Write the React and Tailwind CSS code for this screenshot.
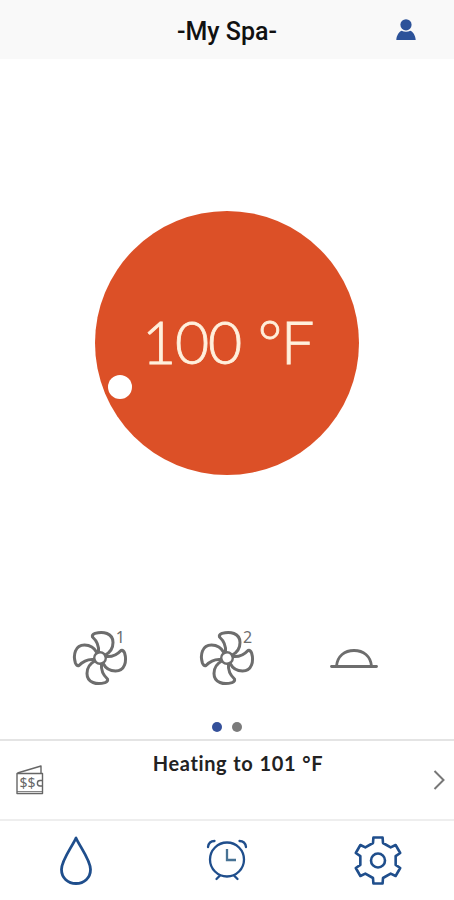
const BLADE = 'M-1.5 -6 C-1 -11 -2 -16 -7.500 -21 C-8 -22.500 -7 -23.800 -5 -24.600 C3 -27 13 -25 13 -15.500 C13 -10.500 10 -5.500 5.200 -3';

const Fan = ({ number }) => (
  <div className="relative h-[60px] w-[60px] text-[#6d6d6d]">
    <svg viewBox="-30 -30 60 60" className="h-full w-full" fill="none" stroke="currentColor" strokeWidth="3" strokeLinecap="round" strokeLinejoin="round">
      <circle r="5.8" strokeWidth="2.4" />
      {[0, 90, 180, 270].map((angle) => (
        <path key={angle} d={BLADE} transform={`rotate(${angle})`} />
      ))}
    </svg>
    <span className="absolute top-[2px] left-[46px] font-['Noto_Sans',sans-serif] text-[16px] leading-[15px]">{number}</span>
  </div>
);

const Cover = () => (
  <svg viewBox="0 0 48 24" className="h-6 w-12 text-[#6d6d6d]" fill="none" stroke="currentColor" strokeWidth="2.8" strokeLinecap="round">
    <path d="M1.5 20.5 H46.5" />
    <path d="M6.5 20 C7.5 10 14.5 4.500 24 4.500 C33.500 4.500 40.500 10 41.500 20" />
  </svg>
);

const Wallet = () => (
  <svg viewBox="0 0 30 32" className="h-8 w-[30px] text-[#666]" fill="none" stroke="currentColor" strokeWidth="1.4" strokeLinejoin="round">
    <path d="M2 9.500 H27.500 V29.500 H2 Z" />
    <path d="M2.500 9 L26 2 V9" />
    <path d="M2 27.500 H27.500" strokeWidth="0.8" />
    <path d="M27.500 16.500 H25 C21.500 16.500 21.500 22 25 22 H27.500" />
    <text x="4.500" y="24" fontSize="14" fontFamily="Noto Sans, sans-serif" fill="currentColor" stroke="none">$$</text>
  </svg>
);

const Drop = () => (
  <svg viewBox="0 0 36 54" className="h-[54px] w-9" fill="none" stroke="currentColor" strokeWidth="2.800" strokeLinejoin="round">
    <path d="M18 4 C14 13 3.500 26 3.500 35.500 C3.500 44 10 49.500 18 49.500 C26 49.500 32.500 44 32.500 35.500 C32.500 26 22 13 18 4 Z" />
  </svg>
);

const AlarmClock = () => (
  <svg viewBox="0 0.5 44 48" className="h-12 w-11" fill="none" stroke="currentColor" strokeWidth="2.300" strokeLinecap="round">
    <circle cx="22" cy="23" r="17" />
    <path d="M22 12.500 V23.500 H31" stroke="#477294" strokeLinecap="butt" />
    <path d="M3 10.500 C3.500 7 6 4.500 9.500 4.500 M34.500 4.500 C38 4.500 40.500 7 41 10.500" />
    <path d="M15 39 L11.500 42.500 M29 39 L32.500 42.500" />
  </svg>
);

const rotate = ([x, y], degrees) => {
  const a = (degrees * Math.PI) / 180;
  return [x * Math.cos(a) - y * Math.sin(a), x * Math.sin(a) + y * Math.cos(a)];
};

const TOOTH = [[-5, -17.5], [-4.600, -23], [4.600, -23], [5, -17.5]];

const GEAR_POINTS = [0, 60, 120, 180, 240, 300]
  .flatMap((angle) => TOOTH.map((point) => rotate(point, angle).map((n) => n.toFixed(2)).join(',')))
  .join(' ');

const Gear = () => (
  <svg viewBox="-26 -25.5 52 52" className="h-[52px] w-[52px]" fill="none" stroke="currentColor" strokeWidth="2.600" strokeLinejoin="round">
    <polygon points={GEAR_POINTS} />
    <circle r="7" />
  </svg>
);

const Header = () => (
  <header className="grid h-[59px] grid-cols-[1fr_auto_1fr] items-center bg-[#f9f9f9]">
    <h1 className="col-start-2 pt-[3px] font-['Roboto',sans-serif] text-[25px] leading-none font-medium text-[#111]">
      -My Spa-
    </h1>
    <button className="mr-[38px] justify-self-end text-[#2c5299]" aria-label="Account">
      <svg viewBox="0 0 20 22" className="h-[22px] w-5" fill="currentColor">
        <circle cx="10" cy="5.800" r="5.600" />
        <path d="M.3 21 C.5 16.500 3 13 5.500 11.800 C8.500 13.200 11.500 13.200 14.500 11.800 C17 13 19.500 16.500 19.700 21 Z" />
      </svg>
    </button>
  </header>
);

const App = () => {
  return (
    <div className="flex h-[900px] w-full flex-col overflow-hidden bg-white">
      <Header />

      {/* Temperature dial */}
      <main className="flex h-[567px] items-center justify-center">
        <div className="relative flex h-[264px] w-[264px] items-center justify-center rounded-full bg-[#dc5027]">
          <span className="pb-[2px] pl-px font-['Lato',sans-serif] text-[59px] leading-none font-light tracking-[-1.2px] [word-spacing:2px] whitespace-pre text-[#fff0dc] [-webkit-text-stroke:0.8px_#fff0dc]">100 °F</span>
          <span className="absolute top-[164px] left-[13px] h-6 w-6 rounded-full bg-white" />
        </div>
      </main>

      {/* Pumps and cover */}
      <section className="flex h-[113px] flex-col">
        <div className="flex h-[64px] items-center justify-around px-[36px]">
          <Fan number="1" />
          <Fan number="2" />
          <div className="flex w-[60px] justify-center"><Cover /></div>
        </div>
        <div className="flex justify-center gap-[10px] pt-[32px]">
          <span className="h-[10px] w-[10px] rounded-full bg-[#34509a]" />
          <span className="h-[10px] w-[10px] rounded-full bg-[#7b7b7b]" />
        </div>
      </section>

      {/* Heating status */}
      <section className="flex h-[80px] items-center border-t-2 border-[#e4e4e4] pr-[9px] pl-[15px]">
        <Wallet />
        <p className="flex-1 self-start pt-[10px] pr-[2px] text-center font-['Lato',sans-serif] text-[20px] leading-[24px] font-bold tracking-[0.6px] [word-spacing:0.7px] text-[#222]">
          Heating to 101 °F
        </p>
        <svg viewBox="0 0 12 22" className="h-[22px] w-3 text-[#777]" fill="none" stroke="currentColor" strokeWidth="2">
          <path d="M1.500 2 L10.500 11 L1.500 20" />
        </svg>
      </section>

      <nav className="grid h-[81px] grid-cols-3 place-items-center border-t-2 border-[#eeeeee] text-[#1f4e8c]">
        <Drop />
        <AlarmClock />
        <Gear />
      </nav>
    </div>
  );
};

export default App;
